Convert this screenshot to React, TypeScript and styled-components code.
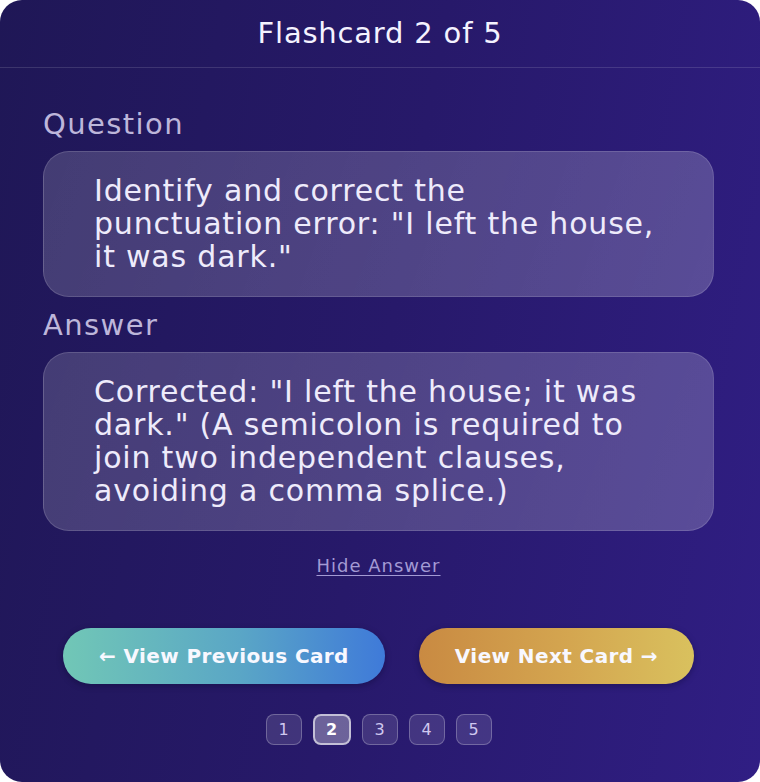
import React, { useState } from "react";
import styled, { createGlobalStyle } from "styled-components";

const GlobalStyle = createGlobalStyle`
  html, body {
    margin: 0;
    padding: 0;
    background: #ffffff;
  }
  * {
    box-sizing: border-box;
  }
`;

const cards = [
  {
    question: "Which sentence uses a comma correctly?",
    answer: "Use a comma before a coordinating conjunction.",
  },
  {
    question: 'Identify and correct the punctuation error: "I left the house, it was dark."',
    answer:
      'Corrected: "I left the house; it was dark." (A semicolon is required to join two independent clauses, avoiding a comma splice.)',
  },
  { question: "What is an apostrophe used for?", answer: "Possession and contractions." },
  { question: "When do you use a colon?", answer: "Before a list or an explanation." },
  { question: "What is a comma splice?", answer: "Two independent clauses joined by a comma." },
];

export default function App() {
  const [index, setIndex] = useState(1);
  const [showAnswer, setShowAnswer] = useState(true);
  const card = cards[index];

  return (
    <>
      <GlobalStyle />
      <Panel>
        <Header>
          Flashcard {index + 1} of {cards.length}
        </Header>
        <Content>
          <Label>Question</Label>
          <TextCard>{card.question}</TextCard>
          {showAnswer && (
            <>
              <Label $spaced>Answer</Label>
              <TextCard>{card.answer}</TextCard>
            </>
          )}
          <ToggleLink onClick={() => setShowAnswer(!showAnswer)}>
            {showAnswer ? "Hide Answer" : "Show Answer"}
          </ToggleLink>
          <NavRow>
            <NavButton $variant="prev" onClick={() => setIndex(Math.max(0, index - 1))}>
              ← View Previous Card
            </NavButton>
            <NavButton
              $variant="next"
              onClick={() => setIndex(Math.min(cards.length - 1, index + 1))}
            >
              View Next Card →
            </NavButton>
          </NavRow>
          <Pager>
            {cards.map((_, i) => (
              <PageDot key={i} $active={i === index} onClick={() => setIndex(i)}>
                {i + 1}
              </PageDot>
            ))}
          </Pager>
        </Content>
      </Panel>
    </>
  );
}

const Panel = styled.div`
  width: 760px;
  height: 782px;
  border-radius: 22px;
  overflow: hidden;
  display: flex;
  flex-direction: column;
  background: linear-gradient(100deg, #1f1756 0%, #27196a 50%, #301e84 100%);
  font-family: "DejaVu Sans", Inter, sans-serif;
  color: #ffffff;
`;

const Header = styled.div`
  height: 68px;
  display: flex;
  align-items: center;
  justify-content: center;
  border-bottom: 1px solid rgba(255, 255, 255, 0.13);
  font-size: 29px;
  letter-spacing: 0.8px;
  font-weight: 400;
  color: #f4f2ff;
  padding-bottom: 2px;
`;

const Content = styled.div`
  display: flex;
  flex-direction: column;
  padding: 39px 46px 0 43px;
`;

const Label = styled.div<{ $spaced?: boolean }>`
  font-size: 29px;
  line-height: 34px;
  letter-spacing: 1.4px;
  font-weight: 400;
  color: #bdb6da;
  margin-top: ${(p) => (p.$spaced ? "11px" : "0")};
  margin-bottom: 10px;
`;

const TextCard = styled.div`
  padding: 22px 52px 23px 50px;
  border-radius: 26px;
  border: 1px solid rgba(255, 255, 255, 0.14);
  background: linear-gradient(110deg, rgba(255, 255, 255, 0.16) 0%, rgba(255, 255, 255, 0.21) 100%);
  font-size: 30px;
  line-height: 33px;
  letter-spacing: 0.8px;
  font-weight: 400;
  color: #eeebfb;
`;

const ToggleLink = styled.button`
  align-self: center;
  margin-top: 24px;
  background: none;
  border: none;
  padding: 0;
  font-family: inherit;
  font-size: 18px;
  line-height: 22px;
  letter-spacing: 1px;
  color: #a39ad4;
  text-decoration: underline;
  text-underline-offset: 3px;
  cursor: pointer;
`;

const NavRow = styled.div`
  display: flex;
  justify-content: center;
  gap: 34px;
  margin-top: 51px;
`;

const NavButton = styled.button<{ $variant: "prev" | "next" }>`
  height: 56px;
  padding: 0 36px;
  border-radius: 28px;
  border: none;
  font-family: inherit;
  font-size: 20px;
  letter-spacing: 0.4px;
  font-weight: 700;
  color: #f8f8ff;
  cursor: pointer;
  box-shadow: 0 2px 6px rgba(10, 6, 40, 0.35);
  background: ${(p) =>
    p.$variant === "prev"
      ? "linear-gradient(90deg, #71c7b6 0%, #5aa6c6 55%, #3f7ad9 100%)"
      : "linear-gradient(90deg, #c98a42 0%, #d4a650 55%, #d9c15e 100%)"};
`;

const Pager = styled.div`
  display: flex;
  justify-content: center;
  gap: 11px;
  margin-top: 30px;
`;

const PageDot = styled.button<{ $active: boolean }>`
  width: ${(p) => (p.$active ? 38 : 36)}px;
  height: 31px;
  border-radius: 8px;
  font-family: inherit;
  font-size: 16px;
  font-weight: ${(p) => (p.$active ? 700 : 400)};
  color: ${(p) => (p.$active ? "#ffffff" : "#cfc8ef")};
  background: ${(p) => (p.$active ? "rgba(255,255,255,0.32)" : "rgba(255,255,255,0.12)")};
  border: ${(p) =>
    p.$active ? "2px solid rgba(255,255,255,0.6)" : "1px solid rgba(255,255,255,0.25)"};
  cursor: pointer;
  padding: 0;
`;
